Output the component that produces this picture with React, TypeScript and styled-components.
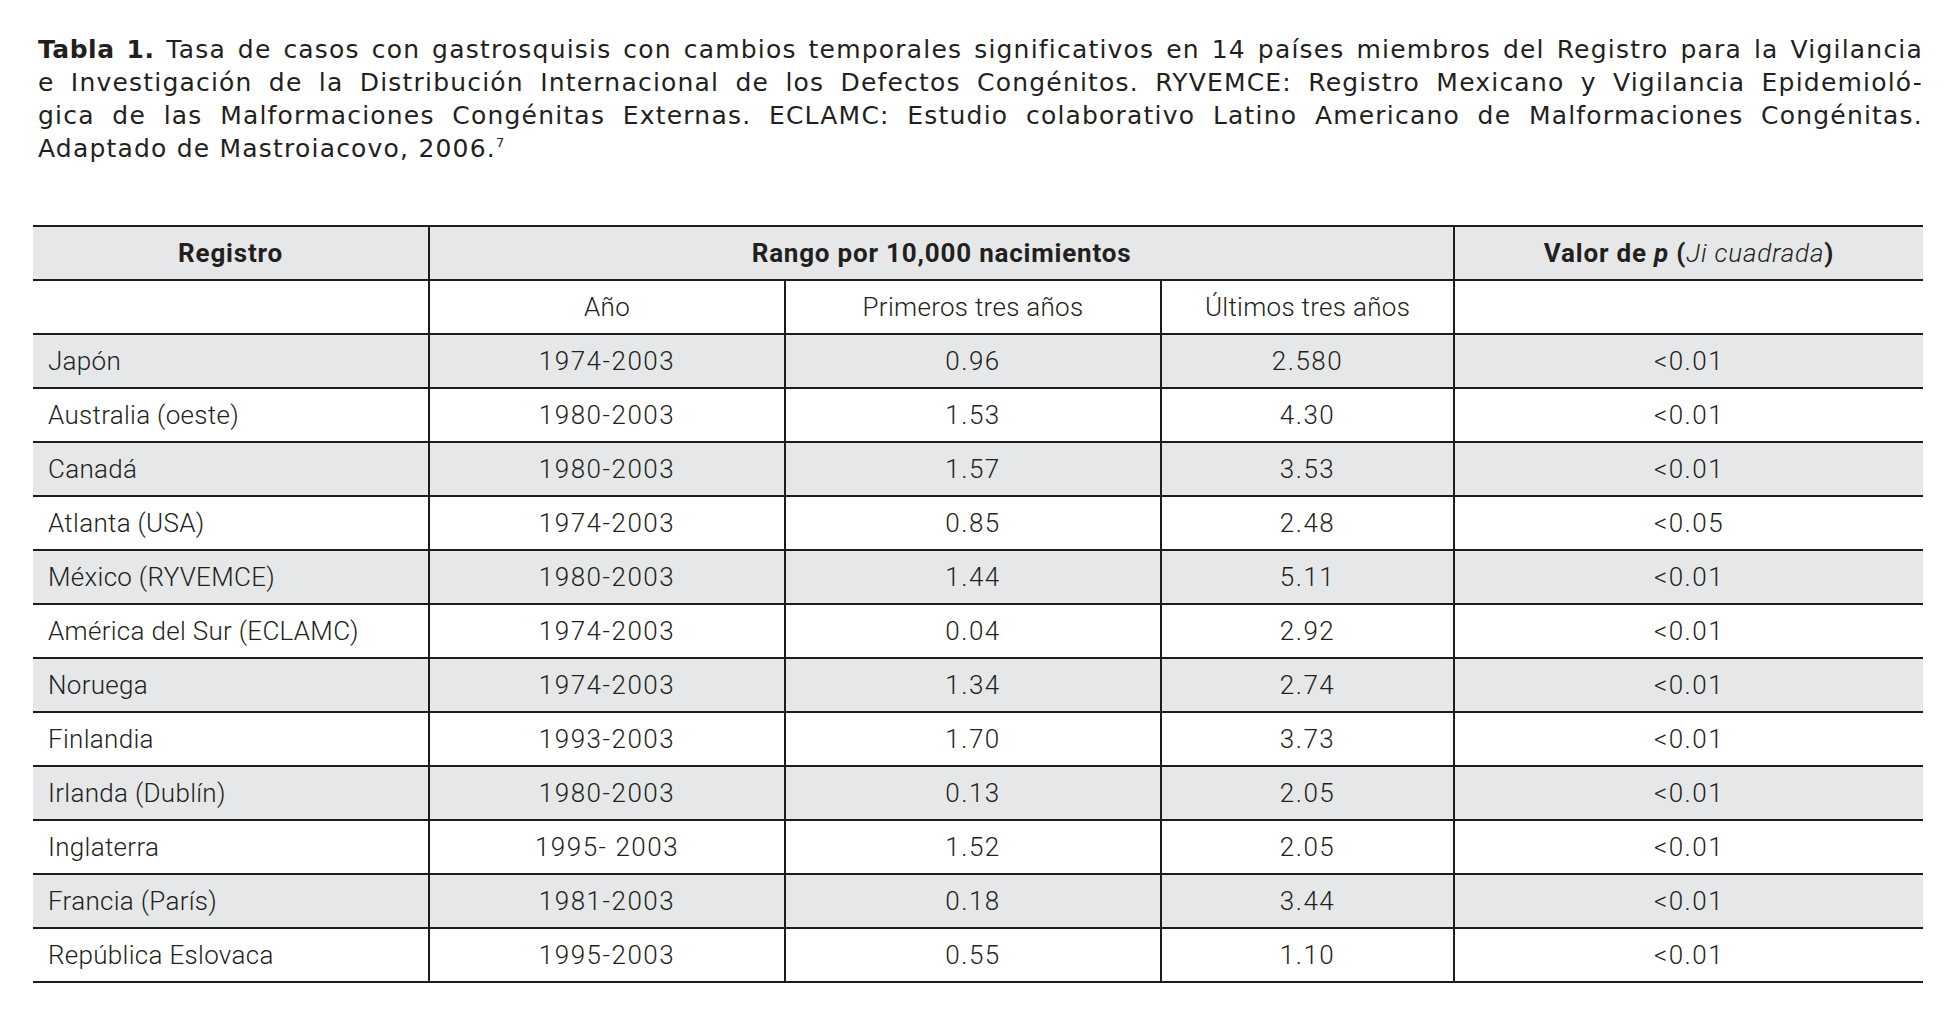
import React from "react";
import styled, { createGlobalStyle } from "styled-components";

const GlobalStyle = createGlobalStyle`
  html, body {
    margin: 0;
    padding: 0;
    background: #ffffff;
  }
  body {
    width: 1954px;
    min-height: 1012px;
  }
`;

const Page = styled.main`
  padding: 33px 31px 0 33px;
  color: #231f20;
`;

const Caption = styled.div`
  font-family: "DejaVu Sans", "Liberation Sans", sans-serif;
  font-size: 25px;
  letter-spacing: 1.2px;
  line-height: 33px;
  height: 132px;
  padding: 0 0 0 5px;
`;

const CaptionLine = styled.div<{ $justify?: boolean }>`
  text-align: left;
  text-align-last: ${(p) => (p.$justify ? "justify" : "left")};
  white-space: ${(p) => (p.$justify ? "normal" : "nowrap")};
`;

const Label = styled.strong`
  font-weight: 700;
  letter-spacing: 0.5px;
`;

const Sup = styled.sup`
  font-size: 13px;
  line-height: 0;
  vertical-align: 10px;
`;

const Table = styled.table`
  margin-top: 60px;
  width: 1890px;
  border-collapse: collapse;
  font-family: Roboto, "Liberation Sans", sans-serif;
  font-weight: 300;
  font-size: 26px;
  color: #231f20;
  table-layout: fixed;
`;

const Row = styled.tr<{ $shade?: boolean }>`
  height: 54px;
  background: ${(p) => (p.$shade ? "#e6e7e8" : "#ffffff")};
`;

const HeadCell = styled.th`
  font-weight: 700;
  letter-spacing: 0.8px;
  text-align: center;
  padding: 0;
  border-top: 2px solid #1e1c1d;
  border-bottom: 2px solid #1e1c1d;
  border-left: 2px solid #1e1c1d;
  &:first-child {
    border-left: none;
  }
`;

const SubHeadCell = styled.td<{ $edge?: boolean }>`
  text-align: center;
  padding: 0;
  letter-spacing: 0.3px;
  border-bottom: 2px solid #1e1c1d;
  border-left: ${(p) => (p.$edge ? "none" : "2px solid #1e1c1d")};
`;

const Cell = styled.td<{ $name?: boolean }>`
  text-align: ${(p) => (p.$name ? "left" : "center")};
  padding: ${(p) => (p.$name ? "0 0 0 15px" : "0")};
  letter-spacing: ${(p) => (p.$name ? "0.3px" : "1.5px")};
  border-bottom: 2px solid #1e1c1d;
  border-left: ${(p) => (p.$name ? "none" : "2px solid #1e1c1d")};
  white-space: nowrap;
`;

const Em = styled.em`
  font-style: italic;
  font-weight: 300;
`;

const EmBold = styled.em`
  font-style: italic;
`;

type Entry = {
  name: string;
  years: string;
  first: string;
  last: string;
  p: string;
};

const data: Entry[] = [
  { name: "Japón", years: "1974-2003", first: "0.96", last: "2.580", p: "<0.01" },
  { name: "Australia (oeste)", years: "1980-2003", first: "1.53", last: "4.30", p: "<0.01" },
  { name: "Canadá", years: "1980-2003", first: "1.57", last: "3.53", p: "<0.01" },
  { name: "Atlanta (USA)", years: "1974-2003", first: "0.85", last: "2.48", p: "<0.05" },
  { name: "México (RYVEMCE)", years: "1980-2003", first: "1.44", last: "5.11", p: "<0.01" },
  { name: "América del Sur (ECLAMC)", years: "1974-2003", first: "0.04", last: "2.92", p: "<0.01" },
  { name: "Noruega", years: "1974-2003", first: "1.34", last: "2.74", p: "<0.01" },
  { name: "Finlandia", years: "1993-2003", first: "1.70", last: "3.73", p: "<0.01" },
  { name: "Irlanda (Dublín)", years: "1980-2003", first: "0.13", last: "2.05", p: "<0.01" },
  { name: "Inglaterra", years: "1995- 2003", first: "1.52", last: "2.05", p: "<0.01" },
  { name: "Francia (París)", years: "1981-2003", first: "0.18", last: "3.44", p: "<0.01" },
  { name: "República Eslovaca", years: "1995-2003", first: "0.55", last: "1.10", p: "<0.01" },
];

export default function App() {
  return (
    <>
      <GlobalStyle />
      <Page>
        <Caption>
          <CaptionLine $justify>
            <Label>Tabla 1.</Label> Tasa de casos con gastrosquisis con cambios temporales significativos en 14 países miembros del Registro para la Vigilancia
          </CaptionLine>
          <CaptionLine $justify>
            e Investigación de la Distribución Internacional de los Defectos Congénitos. RYVEMCE: Registro Mexicano y Vigilancia Epidemioló-
          </CaptionLine>
          <CaptionLine $justify>
            gica de las Malformaciones Congénitas Externas. ECLAMC: Estudio colaborativo Latino Americano de Malformaciones Congénitas.
          </CaptionLine>
          <CaptionLine>
            Adaptado de Mastroiacovo, 2006.<Sup>7</Sup>
          </CaptionLine>
        </Caption>
        <Table>
          <colgroup>
            <col style={{ width: 396 }} />
            <col style={{ width: 356 }} />
            <col style={{ width: 376 }} />
            <col style={{ width: 293 }} />
            <col style={{ width: 469 }} />
          </colgroup>
          <thead>
            <Row $shade>
              <HeadCell>Registro</HeadCell>
              <HeadCell colSpan={3}>Rango por 10,000 nacimientos</HeadCell>
              <HeadCell>
                Valor de <EmBold>p</EmBold> (<Em>Ji cuadrada</Em>)
              </HeadCell>
            </Row>
            <Row>
              <SubHeadCell $edge />
              <SubHeadCell>Año</SubHeadCell>
              <SubHeadCell>Primeros tres años</SubHeadCell>
              <SubHeadCell>Últimos tres años</SubHeadCell>
              <SubHeadCell />
            </Row>
          </thead>
          <tbody>
            {data.map((d, i) => (
              <Row key={d.name} $shade={i % 2 === 0}>
                <Cell $name>{d.name}</Cell>
                <Cell>{d.years}</Cell>
                <Cell>{d.first}</Cell>
                <Cell>{d.last}</Cell>
                <Cell>{d.p}</Cell>
              </Row>
            ))}
          </tbody>
        </Table>
      </Page>
    </>
  );
}
